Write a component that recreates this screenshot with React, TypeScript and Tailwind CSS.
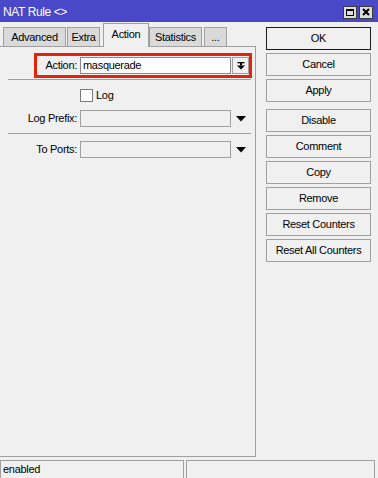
import React from "react";

const Arrow = () => (
  <svg width="10" height="6" viewBox="0 0 10 6" className="block">
    <polygon points="0,0 10,0 5,5.5" fill="#000" />
  </svg>
);

const tabBase =
  "h-[20px] border-t border-l border-r border-[#a0a0a0] bg-[#dadada] flex items-center justify-center";

export default function App() {
  const buttons1 = ["OK", "Cancel", "Apply"];
  const buttons2 = ["Disable", "Comment", "Copy", "Remove", "Reset Counters", "Reset All Counters"];
  return (
    <div className="w-[378px] h-[478px] bg-[#f0f0f0] flex flex-col overflow-hidden text-[11px] tracking-[-0.3px] text-black font-['Liberation_Sans',Arial,sans-serif] leading-none">
      {/* Title bar */}
      <div className="h-[22px] shrink-0 bg-[#4848c8] flex items-center pl-[3px] pr-[5px]">
        <span className="text-white text-[12px] tracking-[-0.4px] mt-[1px]">NAT Rule &lt;&gt;</span>
        <div className="ml-auto flex gap-[2px] mt-[2px]">
          <div className="w-[14px] h-[13px] border border-[#3a3a3a] bg-[#dcdcdc] flex items-center justify-center">
            <div className="w-[8px] h-[7px] border border-black border-t-2" />
          </div>
          <div className="w-[14px] h-[13px] border border-[#3a3a3a] bg-[#dcdcdc] flex items-center justify-center">
            <svg width="8" height="8" viewBox="0 0 8 8">
              <path d="M1 1 L7 7 M7 1 L1 7" stroke="#000" strokeWidth="2" />
            </svg>
          </div>
        </div>
      </div>

      {/* Body */}
      <div className="flex flex-1 min-h-0">
        {/* Left */}
        <div className="w-[256px] flex flex-col">
          <div className="h-[25px] -mb-px flex items-end">
            <div className={`${tabBase} ml-[3px] w-[63px]`}>Advanced</div>
            <div className={`${tabBase} ml-[1px] w-[33px]`}>Extra</div>
            <div className="relative z-10 ml-[3px] w-[46px] h-[24px] border-t border-l border-r border-[#a0a0a0] bg-[#f0f0f0] flex items-center justify-center pb-[2px]">
              Action
            </div>
            <div className={`${tabBase} w-[53px]`}>Statistics</div>
            <div className={`${tabBase} ml-[2px] w-[23px]`}>...</div>
          </div>
          <div className="h-[411px] border-t border-r border-b border-[#a0a0a0] flex flex-col">
            {/* Action row with red highlight */}
            <div className="mt-[6px] ml-[34px] w-[218px] h-[25px] border-[3px] border-[#e4230d] flex items-center">
              <div className="w-[40px] text-right">Action:</div>
              <div className="ml-[3px] w-[151px] h-[17px] bg-white border border-[#8a8a8a] flex items-center pl-[2px]">
                masquerade
              </div>
              <div className="ml-[1px] w-[17px] h-[17px] border border-[#a0a0a0] bg-[#f0f0f0] flex items-center justify-center">
                <svg width="8" height="8" viewBox="0 0 8 8">
                  <rect x="0.5" y="0" width="7" height="1.3" fill="#000" />
                  <rect x="3" y="1" width="2" height="2.5" fill="#000" />
                  <polygon points="0,3.5 8,3.5 4,7.5" fill="#000" />
                </svg>
              </div>
            </div>
            <div className="mt-[1px] ml-[8px] w-[243px] h-px bg-[#a0a0a0]" />
            {/* Log */}
            <div className="mt-[9px] flex items-center">
              <div className="ml-[80px] w-[13px] h-[13px] border border-[#7a7a7a] bg-white" />
              <span className="ml-[3px] text-[11px]">Log</span>
            </div>
            {/* Log Prefix */}
            <div className="mt-[8px] flex items-center">
              <div className="w-[77px] text-right">Log Prefix:</div>
              <div className="ml-[3px] w-[151px] h-[17px] bg-[#f0f0f0] border border-[#a0a0a0]" />
              <div className="ml-[5px]">
                <Arrow />
              </div>
            </div>
            <div className="mt-[6px] ml-[8px] w-[243px] h-px bg-[#a0a0a0]" />
            {/* To Ports */}
            <div className="mt-[7px] flex items-center">
              <div className="w-[77px] text-right">To Ports:</div>
              <div className="ml-[3px] w-[151px] h-[17px] bg-[#f0f0f0] border border-[#a0a0a0]" />
              <div className="ml-[5px]">
                <Arrow />
              </div>
            </div>
          </div>
        </div>

        {/* Right buttons */}
        <div className="ml-[10px] pt-[5px] flex flex-col">
          <div className="flex flex-col gap-[3px]">
            {buttons1.map((b) => (
              <div
                key={b}
                className={`w-[105px] h-[23px] flex items-center justify-center bg-[#f0f0f0] border ${
                  b === "OK" ? "border-[#1a1a1a]" : "border-[#a0a0a0]"
                }`}
              >
                {b}
              </div>
            ))}
          </div>
          <div className="mt-[7px] flex flex-col gap-[3px]">
            {buttons2.map((b) => (
              <div
                key={b}
                className="w-[105px] h-[23px] flex items-center justify-center bg-[#f0f0f0] border border-[#a0a0a0]"
              >
                {b}
              </div>
            ))}
          </div>
        </div>
      </div>

      {/* Status bar */}
      <div className="h-[18px] shrink-0 flex">
        <div className="w-[184px] h-[19px] border border-[#a0a0a0] pl-[2px] flex items-center">enabled</div>
        <div className="ml-[2px] w-[189px] h-[19px] border border-[#a0a0a0]" />
      </div>
    </div>
  );
}
